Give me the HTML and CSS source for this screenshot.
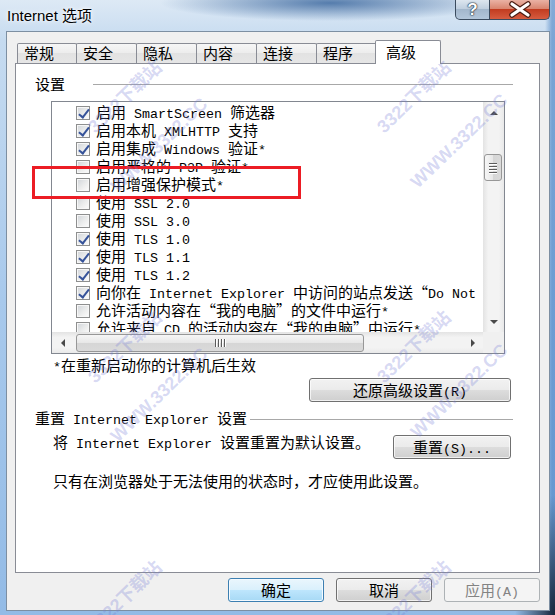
FILE: index.html
```html
<!DOCTYPE html>
<html lang="zh-CN">
<head>
  <meta charset="UTF-8">
  <title>Internet 选项</title>
  <link rel="stylesheet" href="styles.css">
</head>
<body>
  <div class="titlebar">
    <div class="caption">Internet 选项</div>
    <div class="caption-buttons">
      <div class="cap-btn help">?</div>
      <div class="cap-btn close">
        <svg width="58" height="19" viewBox="0 0 58 19">
          <path d="M21 4 L37 15 M37 4 L21 15" stroke="#4a1c12" stroke-width="5.5" stroke-linecap="round"/>
          <path d="M21 4 L37 15 M37 4 L21 15" stroke="#fff" stroke-width="3.2" stroke-linecap="round"/>
        </svg>
      </div>
    </div>
  </div>

  <div class="client">
    <div class="tabs">
      <div class="tab">常规</div>
      <div class="tab">安全</div>
      <div class="tab">隐私</div>
      <div class="tab">内容</div>
      <div class="tab">连接</div>
      <div class="tab">程序</div>
      <div class="tab active">高级</div>
    </div>

    <div class="page">
      <div class="group">
        <span>设置</span>
        <div class="rule first-rule"></div>
      </div>

      <div class="listbox">
        <div class="list-main">
          <div class="list-rows">
            <div class="item"><span class="cb on"></span><span class="label">启用<span class="en"> SmartScreen </span>筛选器</span></div>
            <div class="item"><span class="cb on"></span><span class="label">启用本机<span class="en"> XMLHTTP </span>支持</span></div>
            <div class="item"><span class="cb on"></span><span class="label">启用集成<span class="en"> Windows </span>验证<span class="en">*</span></span></div>
            <div class="item"><span class="cb"></span><span class="label">启用严格的<span class="en"> P3P </span>验证<span class="en">*</span></span></div>
            <div class="item"><span class="cb"></span><span class="label">启用增强保护模式<span class="en">*</span></span></div>
            <div class="item"><span class="cb"></span><span class="label">使用<span class="en"> SSL 2.0</span></span></div>
            <div class="item"><span class="cb"></span><span class="label">使用<span class="en"> SSL 3.0</span></span></div>
            <div class="item"><span class="cb on"></span><span class="label">使用<span class="en"> TLS 1.0</span></span></div>
            <div class="item"><span class="cb on"></span><span class="label">使用<span class="en"> TLS 1.1</span></span></div>
            <div class="item"><span class="cb on"></span><span class="label">使用<span class="en"> TLS 1.2</span></span></div>
            <div class="item"><span class="cb on"></span><span class="label">向你在<span class="en"> Internet Explorer </span>中访问的站点发送<span class="ql">“</span><span class="en">Do Not Track</span><span class="qr">”</span>请求</span></div>
            <div class="item"><span class="cb"></span><span class="label">允许活动内容在<span class="ql">“</span>我的电脑<span class="qr">”</span>的文件中运行<span class="en">*</span></span></div>
            <div class="item"><span class="cb"></span><span class="label">允许来自<span class="en"> CD </span>的活动内容在<span class="ql">“</span>我的电脑<span class="qr">”</span>中运行<span class="en">*</span></span></div>
          </div>
          <div class="vscroll">
            <div class="sb-btn"><span class="arr up"></span></div>
            <div class="vthumb"><i></i><i></i><i></i><i></i></div>
            <div class="sb-btn bottom"><span class="arr down"></span></div>
          </div>
        </div>
        <div class="hbar">
          <div class="hscroll">
            <div class="sb-btn side"><span class="arr left"></span></div>
            <div class="hthumb"><i></i><i></i><i></i><i></i></div>
            <div class="sb-btn side end"><span class="arr right"></span></div>
          </div>
          <div class="corner"></div>
        </div>
      </div>

      <div class="note"><span class="en">*</span>在重新启动你的计算机后生效</div>

      <div class="btn-row">
        <div class="btn restore">还原高级设置<span class="en">(R)</span></div>
      </div>

      <div class="group second">
        <span class="label">重置<span class="en"> Internet Explorer </span>设置</span>
        <div class="rule"></div>
      </div>

      <div class="reset-row">
        <span class="reset-text">将<span class="en"> Internet Explorer </span>设置重置为默认设置。</span>
        <div class="btn reset">重置<span class="en">(S)...</span></div>
      </div>

      <div class="note last">只有在浏览器处于无法使用的状态时，才应使用此设置。</div>
    </div>

    <div class="dialog-buttons">
      <div class="btn dlg default">确定</div>
      <div class="btn dlg">取消</div>
      <div class="btn dlg disabled">应用<span class="en">(A)</span></div>
    </div>
  </div>

  <div class="annot"></div>

  <div class="wm wm-a1">3322下载站</div>
  <div class="wm wm-b1">WWW.3322.CC</div>
  <div class="wm wm-a2">3322下载站</div>
  <div class="wm wm-b2">WWW.3322.CC</div>
  <div class="wm wm-a3">3322下载站</div>
  <div class="wm wm-b3">WWW.3322.CC</div>
  <div class="wm wm-a4">3322下载站</div>
  <div class="wm wm-b4">WWW.3322.CC</div>
  <div class="wm wm-a5">3322下载站</div>
  <div class="wm wm-a6">3322下载站</div>
</body>
</html>
```

FILE: styles.css
```css
* {
  box-sizing: border-box;
}

body {
  margin: 0;
  width: 555px;
  height: 615px;
  overflow: hidden;
  position: relative;
  font-family: "Noto Sans CJK SC", sans-serif;
  font-size: 15px;
  color: #000;
  background:
    radial-gradient(ellipse 170px 18px at 330px 3px, rgba(40, 88, 148, 0.75), rgba(40, 88, 148, 0)),
    radial-gradient(ellipse 40px 120px at 555px 615px, #17263a, rgba(23, 38, 58, 0)),
    linear-gradient(90deg, rgba(60, 120, 190, 0) 545px, rgba(60, 120, 190, 0.55) 552px),
    linear-gradient(180deg, #dde9f5 0, #c6dbf0 40px, #a8c9ec 300px, #93bbe6 615px);
}

.en {
  font-family: "Liberation Mono", monospace;
  font-size: 13.33px;
}

.ql,
.qr {
  display: inline-block;
  width: 15px;
}

.ql {
  text-align: right;
}

.qr {
  text-align: left;
}

/* title bar */

.titlebar {
  display: flex;
  height: 31px;
}

.caption {
  padding: 7px 0 0 7px;
  font-family: "Liberation Sans", "Noto Sans CJK SC", sans-serif;
  font-size: 15px;
  line-height: 18px;
  text-shadow: 0 0 6px #fff, 0 0 3px #fff;
}

.caption-buttons {
  display: flex;
  margin-left: auto;
  margin-right: 5px;
  height: 20px;
}

.cap-btn {
  height: 20px;
  border: 1px solid #3b4b5e;
  border-top: none;
  display: flex;
  align-items: center;
  justify-content: center;
}

.help {
  width: 35px;
  border-radius: 0 0 0 5px;
  background: linear-gradient(#dde6ef, #c0cfdf 45%, #a3b7cc 50%, #b3c6da);
  color: #fff;
  font-family: "Liberation Sans", sans-serif;
  font-weight: bold;
  font-size: 17px;
  text-shadow: 0 0 1px #1e2c3c, 0 0 1px #1e2c3c, 0 0 2px #1e2c3c;
}

.close {
  width: 60px;
  border-left: none;
  border-radius: 0 0 5px 0;
  background: linear-gradient(#eab2a4, #d98670 45%, #c23c20 50%, #d65c40);
}

/* dialog client area */

.client {
  margin-left: 6px;
  width: 544px;
  height: 580px;
  border: 1px solid #7d8fa2;
  background: #f0f0f0;
}

.tabs {
  display: flex;
  align-items: flex-end;
  height: 23px;
  margin: 8px 0 0 10px;
}

.tab {
  width: 61px;
  height: 20px;
  margin-left: -1px;
  padding-left: 6px;
  border: 1px solid #898c95;
  border-bottom: none;
  border-radius: 2px 2px 0 0;
  background: linear-gradient(#f6f6f6, #ececec 50%, #e2e2e2 50%, #e6e6e6);
  line-height: 18px;
}

.tab:first-child {
  width: 60px;
  margin-left: 0;
}

.tab.active {
  position: relative;
  z-index: 1;
  width: 66px;
  height: 24px;
  margin-left: -2px;
  margin-bottom: -1px;
  padding-left: 10px;
  background: #fff;
  line-height: 22px;
}

.page {
  margin-left: 8px;
  width: 525px;
  height: 510px;
  border: 1px solid #898c95;
  background: #fff;
}

.group {
  display: flex;
  align-items: center;
  height: 18px;
  margin: 11px 26px 0 19px;
  line-height: 18px;
}

.rule {
  flex: 1;
  height: 1px;
  margin-left: 3px;
  background: #a8a8a8;
}

.first-rule {
  margin-left: 28px;
}

/* list box */

.listbox {
  margin: 8px 0 0 35px;
  width: 454px;
  height: 253px;
  border: 1px solid #828790;
  display: flex;
  flex-direction: column;
}

.list-main {
  display: flex;
  height: 230px;
}

.list-rows {
  flex: 1;
  overflow: hidden;
  padding-top: 2px;
  white-space: nowrap;
}

.item {
  display: flex;
  align-items: center;
  height: 18px;
  padding-left: 24px;
  line-height: 18px;
}

.label {
  white-space: pre;
}

.cb {
  position: relative;
  flex: none;
  width: 14px;
  height: 14px;
  margin-right: 6px;
  border: 1px solid #8e8f8f;
  background: linear-gradient(135deg, #d0d4d9, #eceded 55%, #fdfdfd);
  box-shadow: inset 0 0 0 1px #f7f7f7;
}

.cb.on::after {
  content: "";
  position: absolute;
  left: 4px;
  top: 0;
  width: 4px;
  height: 9px;
  border: solid #36539a;
  border-width: 0 2px 2px 0;
  transform: rotate(38deg);
}

.vscroll {
  width: 21px;
  display: flex;
  flex-direction: column;
  background: linear-gradient(90deg, #e3e3e3, #f3f3f3 25%, #f3f3f3 75%, #e9e9e9);
}

.sb-btn {
  height: 21px;
  display: flex;
  align-items: center;
  justify-content: center;
}

.sb-btn.bottom {
  margin-top: auto;
}

.arr {
  width: 0;
  height: 0;
  border: 4px solid transparent;
}

.arr.up {
  border-bottom: 4px solid #4a4a4a;
  border-top-width: 0;
}

.arr.down {
  border-top: 4px solid #4a4a4a;
  border-bottom-width: 0;
}

.arr.left {
  border-right: 4px solid #4a4a4a;
  border-left-width: 0;
}

.arr.right {
  border-left: 4px solid #4a4a4a;
  border-right-width: 0;
}

.vthumb {
  margin: 31px 0 0 1px;
  width: 18px;
  height: 27px;
  border: 1px solid #979797;
  border-radius: 3px;
  background: linear-gradient(90deg, #f6f6f6, #e7e7e7 50%, #d6d6d6 50%, #dadada);
  display: flex;
  flex-direction: column;
  align-items: center;
  justify-content: center;
  gap: 2px;
}

.vthumb i {
  width: 8px;
  height: 1px;
  background: #5c5c5c;
  box-shadow: 0 1px 0 #fff;
}

.hbar {
  display: flex;
  height: 21px;
}

.hscroll {
  flex: 1;
  display: flex;
  align-items: center;
  background: linear-gradient(#e3e3e3, #f3f3f3 25%, #f3f3f3 75%, #e9e9e9);
}

.sb-btn.side {
  width: 21px;
}

.sb-btn.end {
  margin-left: auto;
}

.hthumb {
  margin-left: 3px;
  width: 288px;
  height: 18px;
  border: 1px solid #979797;
  border-radius: 3px;
  background: linear-gradient(#f6f6f6, #e7e7e7 50%, #d6d6d6 50%, #dadada);
  display: flex;
  align-items: center;
  justify-content: center;
  gap: 2px;
}

.hthumb i {
  width: 1px;
  height: 8px;
  background: #5c5c5c;
  box-shadow: 1px 0 0 #fff;
}

.corner {
  width: 21px;
  background: #f0f0f0;
}

/* lower part */

.note {
  margin: 2px 0 0 37px;
  height: 18px;
  line-height: 18px;
}

.btn-row {
  display: flex;
  justify-content: flex-end;
  margin: 4px 28px 0 0;
}

.btn {
  height: 24px;
  border: 1px solid #707070;
  border-radius: 3px;
  background: linear-gradient(#f2f2f2, #ebebeb 50%, #dddddd 50%, #cfcfcf);
  box-shadow: inset 0 0 0 1px rgba(255, 255, 255, 0.7);
  text-align: center;
  line-height: 22px;
}

.btn.restore {
  width: 202px;
}

.group.second {
  margin-top: 8px;
}

.reset-row {
  display: flex;
  align-items: flex-start;
  margin: 5px 28px 0 37px;
  height: 26px;
}

.reset-text {
  line-height: 18px;
  white-space: pre;
}

.btn.reset {
  margin: 2px 0 0 auto;
  width: 118px;
}

.note.last {
  margin-top: 13px;
}

.dialog-buttons {
  display: flex;
  justify-content: flex-end;
  gap: 12px;
  margin-top: 5px;
  padding-right: 9px;
}

.btn.dlg {
  width: 96px;
}

.btn.default {
  border-color: #3c7fb1;
  background: linear-gradient(#eaf6fd, #d9f0fc 50%, #bee6fd 50%, #a7d9f5);
  box-shadow: inset 0 0 0 1px #f4faff;
}

.btn.disabled {
  border-color: #adb2b5;
  background: #f4f4f4;
  box-shadow: none;
  color: #838383;
}

/* overlays */

.annot {
  position: absolute;
  left: 32px;
  top: 166px;
  width: 269px;
  height: 33px;
  border: 3px solid #ec1c24;
}

.wm {
  position: absolute;
  white-space: nowrap;
  font-family: "Liberation Sans", "Noto Sans CJK SC", sans-serif;
  font-weight: bold;
  font-size: 18px;
  line-height: 22px;
  color: rgba(118, 126, 214, 0.3);
  transform: rotate(-44deg);
  pointer-events: none;
}

.wm-a1 { left: 78px; top: 86px; }
.wm-b1 { left: 96px; top: 134px; }
.wm-a2 { left: 367px; top: 86px; }
.wm-b2 { left: 396px; top: 130px; }
.wm-a3 { left: 78px; top: 336px; }
.wm-b3 { left: 96px; top: 384px; }
.wm-a4 { left: 367px; top: 336px; }
.wm-b4 { left: 396px; top: 380px; }
.wm-a5 { left: 78px; top: 586px; }
.wm-a6 { left: 367px; top: 586px; }
```
